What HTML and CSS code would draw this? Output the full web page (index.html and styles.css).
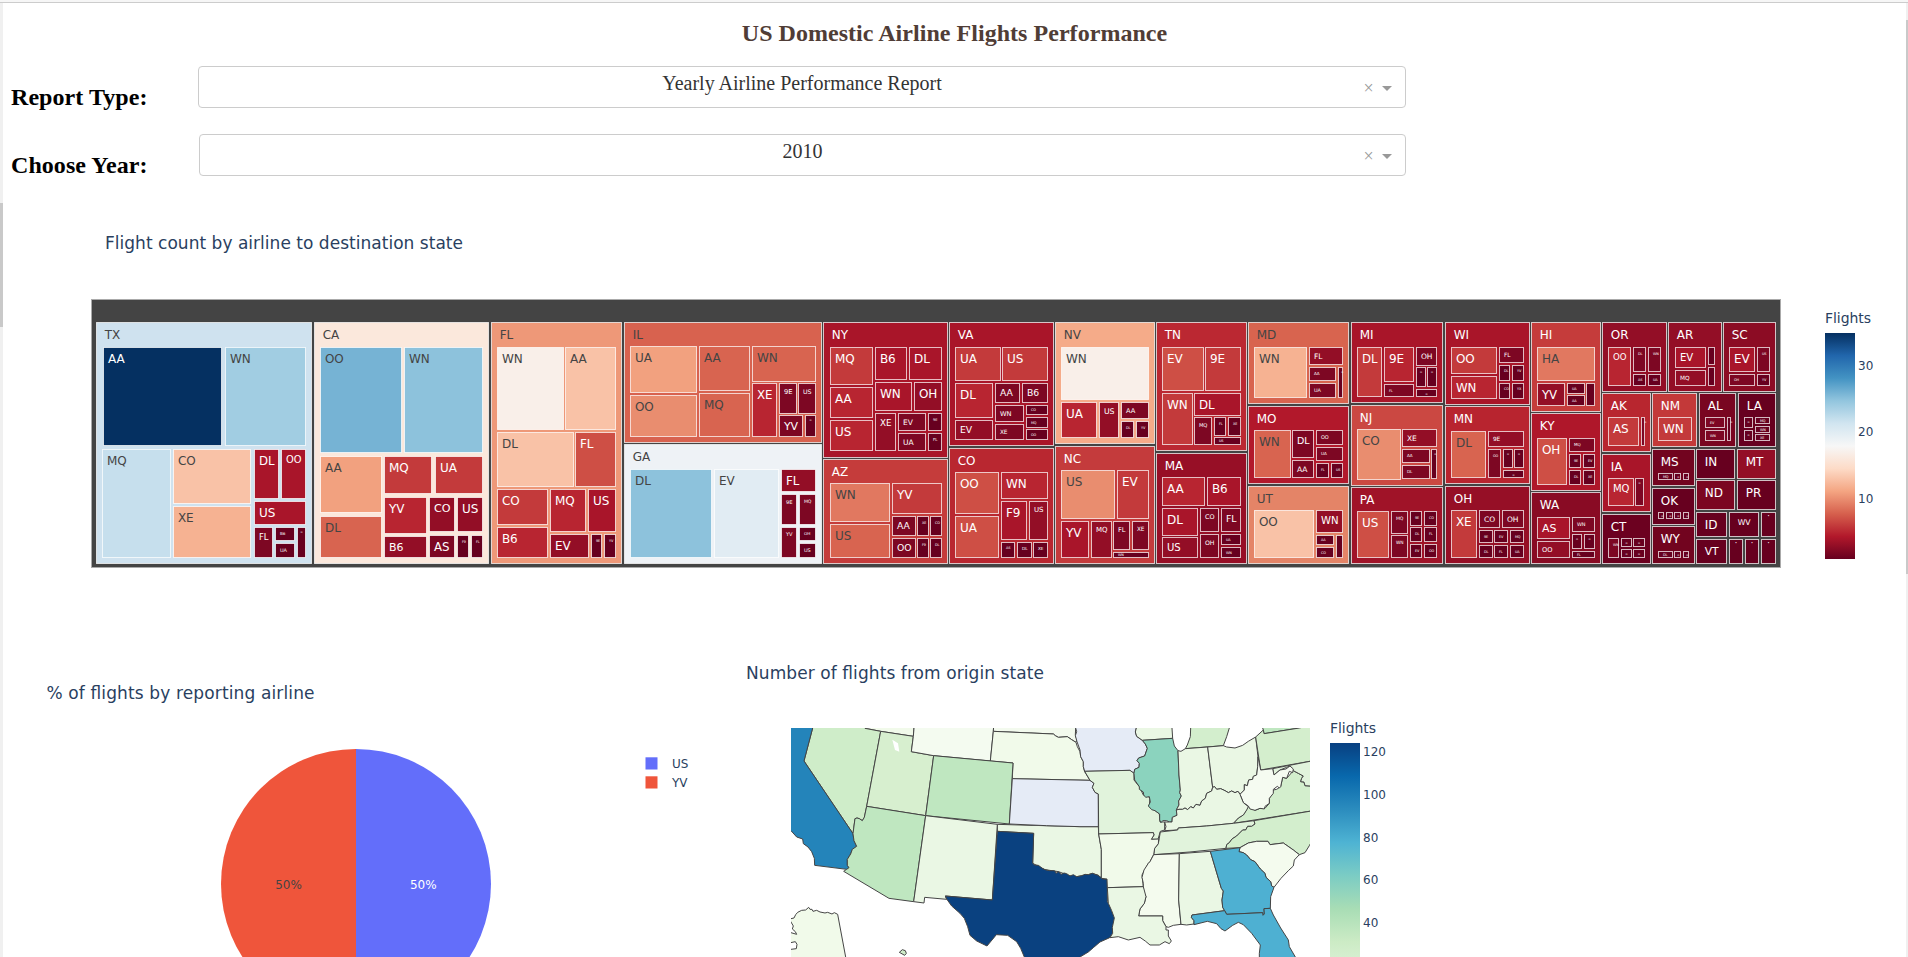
FILE: index.html
```html
<!DOCTYPE html>
<html lang="en">
<head>
<meta charset="utf-8">
<title>US Domestic Airline Flights Performance</title>
<link rel="stylesheet" href="styles.css">
</head>
<body>
<div class="topline"></div>
<div class="shell">
  <div class="rail rail-left"><div class="thumb thumb-left"></div></div>
  <main class="page">
    <h1 class="title">US Domestic Airline Flights Performance</h1>
    <div class="field">
      <h2 class="label">Report Type:</h2>
      <div class="select"><span class="value">Yearly Airline Performance Report</span><span class="clear">×</span><span class="arrow"></span></div>
    </div>
    <div class="field field-year">
      <h2 class="label">Choose Year:</h2>
      <div class="select"><span class="value">2010</span><span class="clear">×</span><span class="arrow"></span></div>
    </div>
    <svg class="chart tree" viewBox="3 190 1903 450" width="1903" height="450">
      <defs>
        <linearGradient id="rdbu" x1="0" y1="1" x2="0" y2="0">
          <stop offset="0" stop-color="#67001f"/><stop offset=".1" stop-color="#b2182b"/><stop offset=".2" stop-color="#d6604d"/><stop offset=".3" stop-color="#f4a582"/><stop offset=".4" stop-color="#fddbc7"/><stop offset=".5" stop-color="#f7f7f7"/><stop offset=".6" stop-color="#d1e5f0"/><stop offset=".7" stop-color="#92c5de"/><stop offset=".8" stop-color="#4393c3"/><stop offset=".9" stop-color="#2166ac"/><stop offset="1" stop-color="#053061"/>
        </linearGradient>
      </defs>
      <text class="chart-title" x="105" y="249" textLength="358">Flight count by airline to destination state</text>
      <g id="tree"></g>
      <text class="bar-title" x="1825" y="323" textLength="46">Flights</text>
      <rect x="1825" y="333" width="30" height="226" fill="url(#rdbu)"/>
      <g class="tick"><text x="1858" y="370">30</text><text x="1858" y="436">20</text><text x="1858" y="503">10</text></g>
    </svg>
    <div class="row">
      <svg class="chart" viewBox="3 640 700 317" width="700" height="317">
        <text class="chart-title" x="46.5" y="699" textLength="268">% of flights by reporting airline</text>
        <path d="M356 884V749a135 135 0 0 0 0 270z" fill="#ef553b"/>
        <path d="M356 884V749a135 135 0 0 1 0 270z" fill="#636efa"/>
        <g class="pct"><text x="288.5" y="888.5" fill="#444">50%</text><text x="423.3" y="888.5" fill="#fff">50%</text></g>
        <rect x="645.5" y="757.3" width="12" height="12.2" fill="#636efa"/><rect x="645.5" y="776.3" width="12" height="12.2" fill="#ef553b"/>
        <g class="tick"><text x="672" y="768">US</text><text x="672" y="787">YV</text></g>
      </svg>
      <svg class="chart" viewBox="703 640 1203 317" width="1203" height="317">
        <defs>
          <clipPath id="frame"><rect x="791" y="728" width="519" height="240"/></clipPath>
          <linearGradient id="gnbu" x1="0" y1="0" x2="0" y2="1">
            <stop offset="0" stop-color="#084081"/><stop offset=".125" stop-color="#0868ac"/><stop offset=".25" stop-color="#2b8cbe"/><stop offset=".375" stop-color="#4eb3d3"/><stop offset=".5" stop-color="#7bccc4"/><stop offset=".625" stop-color="#a8ddb5"/><stop offset=".75" stop-color="#ccebc5"/><stop offset=".875" stop-color="#e0f3db"/><stop offset="1" stop-color="#f7fcf0"/>
          </linearGradient>
        </defs>
        <text class="chart-title" x="746" y="678.5" textLength="298">Number of flights from origin state</text>
        <g clip-path="url(#frame)"><g id="west" class="states" transform="translate(780 700) scale(.33333)"></g><g id="east" class="states" transform="translate(1060 700) scale(.33333)"></g></g>
        <text class="bar-title" x="1330" y="733" textLength="46">Flights</text>
        <rect x="1330" y="743" width="30" height="265" fill="url(#gnbu)"/>
        <g class="tick"><text x="1363" y="756">120</text><text x="1363" y="799">100</text><text x="1363" y="842">80</text><text x="1363" y="884">60</text><text x="1363" y="927">40</text></g>
      </svg>
    </div>
  </main>
  <div class="rail rail-right"><div class="thumb thumb-right"></div></div>
</div>
<script src="charts.js"></script>
</body>
</html>
```
FILE: styles.css
```css
body { margin: 0; background: #fff; font-family: "Liberation Serif", serif; overflow: hidden; }
.topline { height: 2px; background: #f6f6f6; border-bottom: 1px solid #ccc; }
.shell { display: grid; grid-template-columns: 3px 1903px 2px; height: 954px; overflow: hidden; }
.rail { background: #f0f0f0; }
.rail-left { padding-top: 200px; }
.rail-right { padding-top: 17px; }
.thumb { background: #c9c9c9; }
.thumb-left { height: 124px; }
.thumb-right { height: 554px; }
.page { overflow: hidden; }
.title { margin: 0; padding: 16px 0 0; height: 47px; box-sizing: border-box; font-size: 24px; line-height: 28px; letter-spacing: .04px; text-align: center; color: #503d36; }
.field { display: grid; grid-template-columns: 187px 1208px; margin: 16px 0 0 8px; height: 42px; }
.field-year { margin-top: 26px; grid-template-columns: 188px 1207px; }
.label { margin: 0; padding-top: 18px; font-size: 24px; line-height: 27px; letter-spacing: .06px; color: #000; white-space: nowrap; }
.select { display: grid; grid-template-columns: 1fr 17px 26px; box-sizing: border-box; height: 42px; border: 1px solid #ccc; border-radius: 4px; }
.value { padding: 4px 0 0 43px; font-size: 20px; line-height: 24px; text-align: center; color: #333; }
.clear { padding-top: 11px; font-size: 18px; line-height: 20px; color: #999; text-align: center; margin-left: -4px; }
.arrow { width: 0; height: 0; margin: 19px 0 0 3px; border: 5px solid transparent; border-top-color: #999; border-bottom: 0; }
.chart { display: block; font-family: "DejaVu Sans", Verdana, sans-serif; }
.tree { margin-top: 14px; }
.row { display: flex; }
.chart-title { font-size: 17px; fill: #2a3f5f; }
.bar-title { font-size: 14px; fill: #2a3f5f; }
.tick { font-size: 12px; fill: #2a3f5f; }
.pct { font-size: 12px; text-anchor: middle; }
.cell { stroke: #fff; stroke-opacity: .72; stroke-width: 1; }
.root { fill: #444; stroke: #aaa; }
.light { fill: #fff; }
.dark { fill: #444; }
.states { stroke: #444; stroke-width: 3; stroke-linejoin: round; }
.lake { fill: #fff; stroke: none; }
```
FILE: charts.js
```js
const NS = 'http://www.w3.org/2000/svg';
function add(parent, tag, attrs, text) {
  const el = document.createElementNS(NS, tag);
  for (const k in attrs) el.setAttribute(k, attrs[k]);
  if (text) el.textContent = text;
  parent.appendChild(el);
  return el;
}
const STOPS = [[103,0,31],[178,24,43],[214,96,77],[244,165,130],[253,219,199],[247,247,247],[209,229,240],[146,197,222],[67,147,195],[33,102,172],[5,48,97]];
function rdbu(v) {
  const t = (v - 1) / 3.4, i = Math.min(9, Math.floor(t)), f = t - i;
  return `rgb(${STOPS[i].map((c, k) => Math.round(c + (STOPS[i + 1][k] - c) * f))})`;
}
// Each block: left origin, then states as [name, fill, text tone, "x0 y0 x1 y1", "airline flights x0 y0 x1 y1; ..."], in thirds of a pixel.
const BLOCKS = [
[85, [
['TX','#cfe2ef','dark','35 98 681 820','AA 35 54 171 411 468;WN 24 420 171 662 468;MQ 22 53 477 257 802;CO 13 266 477 498 641;XE 12 266 650 498 802;DL 4 507 477 580 626;OO 4 589 477 662 626;US 4 507 635 662 703;FL 2 507 712 564 802;B6 1 572 712 629 751;UA 1 572 761 629 802;- 1 638 712 662 802'],
['CA','#fbe8dc','dark','687 98 1212 820','OO 26 707 171 949 489;WN 25 959 171 1193 489;AA 11 707 498 889 669;DL 8 707 678 889 802;MQ 6 899 498 1041 612;UA 6 1050 498 1193 612;YV 5 899 623 1025 730;B6 3 899 740 1025 802;CO 3 1034 623 1109 726;US 3 1118 623 1193 726;AS 2 1034 736 1109 802;F9 1 1118 736 1151 802;FL 1 1160 736 1193 802']]],
[480, [
['FL','#ee9878','dark','35 98 426 820','WN 17 52 171 250 419;AA 13 257 171 408 419;DL 13 52 427 281 590;FL 7 287 427 408 590;CO 6 52 597 204 705;MQ 5 212 597 318 726;US 4 325 597 408 726;B6 5 52 712 204 802;EV 3 212 733 326 802;9E 1 333 733 366 802;YV 1 374 733 408 802'],
['IL','#d8624f','dark','432 98 1026 459','UA 11 450 170 651 308;OO 10 450 316 651 441;AA 8 657 170 809 302;MQ 8 657 309 809 441;WN 8 816 170 1007 274;XE 5 816 281 891 441;9E 2 898 281 949 370;US 2 956 281 1007 370;YV 2 898 377 969 441;- 1 976 377 1007 441'],
['GA','#eef2f6','dark','432 464 1026 820','DL 25 451 539 694 802;EV 20 702 539 895 802;FL 3 904 539 1006 604;9E 2 904 612 950 703;MQ 2 959 612 1006 703;YV 2 904 711 950 802;OH 1 959 711 1006 752;US 1 959 761 1006 802']]],
[815, [
['NY','#a91529','light','26 98 397 502','MQ 6 45 171 174 284;AA 5 45 291 174 384;US 5 45 391 174 483;B6 4 181 171 276 269;DL 4 283 171 380 269;WN 4 181 277 291 363;OH 3 298 277 380 363;XE 3 181 371 242 483;EV 2 250 371 333 423;UA 2 250 430 333 483;9E 1 341 371 380 423;FL 1 341 430 380 483'],
['AZ','#c53c3b','light','26 508 397 820','WN 9 45 580 225 695;US 8 45 702 225 802;YV 6 231 580 380 671;AA 2 231 679 302 737;OO 2 231 744 302 802;XE 1 308 679 340 737;CO 1 346 679 380 737;F9 1 308 744 340 802;DL 1 346 744 380 802'],
['VA','#a91529','light','404 98 716 467','UA 6 421 171 556 273;US 6 563 171 698 273;DL 5 421 281 533 384;EV 3 421 391 533 449;AA 2 541 281 615 338;B6 2 622 281 698 338;WN 2 541 345 626 394;XE 2 541 402 626 449;CO 1 634 345 698 375;MQ 1 634 382 698 413;OO 1 634 419 698 449'],
['CO','#b92730','light','404 474 716 820','OO 7 421 547 551 671;UA 7 421 679 551 802;WN 5 558 547 698 627;F9 4 558 634 635 749;US 3 642 634 698 749;AS 1 558 757 600 802;DL 1 606 757 649 802;XE 1 655 757 698 802']]],
[1045, [
['NV','#f5ab89','dark','32 98 328 462','WN 17 50 171 311 328;UA 5 50 336 155 443;US 3 162 336 221 443;AA 2 228 336 311 386;DL 1 228 393 266 443;YV 1 274 393 311 443'],
['NC','#c43b3c','light','32 469 328 820','US 10 50 541 209 687;EV 6 217 541 311 687;YV 4 50 694 131 802;MQ 3 139 694 199 802;FL 2 206 694 254 779;XE 2 262 694 311 779;WN 1 206 787 311 802'],
['TN','#bb2832','light','335 98 604 483','EV 7 352 171 476 303;9E 6 482 171 587 303;WN 6 352 310 442 465;DL 4 448 310 587 376;MQ 2 448 383 500 465;FL 1 507 383 543 436;XE 1 550 383 587 436;US 1 507 443 587 465'],
['MA','#970f26','light','335 490 604 820','AA 5 352 562 480 648;B6 4 486 562 587 648;DL 4 352 656 458 736;US 3 352 743 458 802;CO 2 465 656 521 725;OH 2 465 733 521 802;FL 2 528 656 587 725;UA 1 528 733 587 764;WN 1 528 771 587 802']]],
[1240, [
['MD','#d8644f','dark','25 98 327 342','WN 12 43 171 201 324;FL 3 207 171 309 224;AA 2 207 231 287 273;UA 2 207 281 287 324;- 1 294 231 309 324'],
['MO','#b2182b','light','25 348 327 581','WN 8 43 421 152 563;DL 2 158 421 222 503;AA 2 158 511 222 563;OO 2 229 421 309 464;UA 2 229 472 309 512;FL 1 229 520 267 563;US 1 273 520 309 563'],
['UT','#e48467','dark','25 588 327 820','OO 13 43 660 222 802;WN 3 229 660 309 727;AA 1 229 735 281 764;CO 1 229 772 281 802; 1 288 735 309 802'],
['MI','#a91529','light','334 98 608 338','DL 6 352 171 426 320;9E 5 433 171 521 275;FL 2 433 283 521 320;OH 2 528 171 591 226;- 1 528 232 557 290;- 1 563 232 591 290;- 1 528 297 591 320'],
['NJ','#cb4842','light','334 346 608 586','CO 10 352 418 481 569;XE 3 487 418 591 470;AA 2 487 477 568 519;DL 2 487 526 568 567;- 1 575 477 591 567'],
['PA','#a01328','light','334 592 608 820','US 7 352 665 446 802;MQ 2 453 665 503 730;WN 2 453 737 503 802;9E 1 510 665 546 707;CO 1 553 665 591 707;DL 1 510 713 546 755;FL 1 553 713 591 755;EV 1 510 762 546 802;OO 1 553 762 591 802']]],
[1430, [
['WI','#a91529','light','45 98 299 343','OO 6 63 171 201 251;WN 5 63 259 201 326;FL 2 207 171 281 217;DL 1 207 225 240 271;YV 1 247 225 281 271;CO 1 207 279 240 326;YX 1 247 279 281 326'],
['MN','#b8242f','light','45 350 299 581','DL 8 63 423 168 563;9E 3 174 423 281 470;OO 2 174 478 212 563;- 1 219 478 247 533;- 1 254 478 281 533;- 1 219 541 281 563'],
['OH','#960f26','light','45 588 299 820','XE 6 63 660 140 802;CO 2 147 660 210 713;OH 2 217 660 281 713;9E 1 147 720 187 757;EV 1 193 720 233 757;MQ 1 240 720 281 757;DL 1 147 765 187 802;FL 1 193 765 233 802;UA 1 240 765 281 802'],
['HI','#c53c3b','light','305 98 511 364','HA 9 323 171 493 272;YV 3 323 280 405 346;UA 1 412 280 463 310;AA 1 412 317 463 346; 1 470 280 493 346'],
['KY','#af172a','light','305 371 511 602','OH 7 323 444 411 583;MQ 2 417 444 493 485;9E 1 417 493 453 533;EV 1 460 493 493 533;DL 1 417 541 453 583;XE 1 460 541 493 583'],
['WA','#890b24','light','305 608 511 820','AS 4 323 681 419 746;OO 3 323 753 419 802;WN 2 426 681 493 725;- 1 426 732 455 776;- 1 462 732 493 776;FL 1 426 783 493 802']]],
[1590, [
['OR','#930e26','light','38 98 230 304','OO 5 55 171 122 286;DL 2 130 171 167 245;WN 2 174 171 212 245;AS 1 130 252 167 286;UA 1 174 252 212 286'],
['AR','#930e26','light','236 98 394 304','EV 4 255 171 347 234;MQ 3 255 241 347 286; 1 354 171 374 225; 1 354 232 374 286'],
['SC','#8c0c24','light','400 98 557 304','EV 4 418 171 495 245;US 2 502 171 539 245;OH 2 418 252 495 286;YV 1 502 252 539 286'],
['AK','#b8262f','light','38 311 181 485','AS 6 55 383 147 467;- 2 153 383 163 467'],
['NM','#c33939','light','188 311 321 469','WN 6 204 383 304 451'],
['AL','#790621','light','328 311 438 469','EV 2 346 383 404 413;WN 2 346 421 404 451;- 1 411 383 421 451'],
['LA','#67001f','light','445 311 557 469','- 1 464 383 489 413;- 1 464 421 489 451;MQ 1 496 383 539 402;WN 1 496 408 539 427;XE 1 496 433 539 451'],
['IA','#a91529','light','38 492 181 664','MQ 5 55 565 130 647;- 2 137 565 161 647'],
['CT','#6c0120','light','38 672 181 820','WN 2 55 744 87 802;- 1 94 744 125 770;- 1 131 744 163 770;- 1 94 777 125 802;- 1 131 777 163 802'],
['MS','#72041f','light','188 477 314 587','MQ 1 205 549 247 569;- 1 253 549 272 569;- 1 279 549 297 569'],
['OK','#67001f','light','188 594 314 703','- 1 205 666 222 686;- 1 229 666 247 686;- 1 253 666 272 686;- 1 279 666 297 686'],
['WY','#72041f','light','188 710 314 820','DL 1 205 783 247 802;- 1 253 783 272 802;- 1 279 783 297 802'],
['IN','#67001f','light','320 477 435 565',''],['MT','#930e26','light','442 477 557 565',''],
['ND','#7b0621','light','320 572 435 660',''],['PR','#67001f','light','442 572 557 660',''],
['ID','#67001f','light','320 667 411 741',''],['WV','#67001f','light','418 667 507 741',''],['·','#67001f','light','513 667 557 741',''],
['VT','#67001f','light','320 747 411 820',''],['·','#67001f','light','418 747 459 820',''],['·','#67001f','light','465 747 507 820',''],['·','#67001f','light','513 747 557 820','']]]
];
const tree = document.getElementById('tree');
add(tree, 'rect', {class: 'root', x: 91.5, y: 299.5, width: 1689, height: 268});
function box(ox, q, fill, name, tone, state) {
  const snap = n => Math.floor(n) + .5;
  const x = snap(ox + q[0] / 3), y = snap(290 + q[1] / 3);
  const w = snap(ox + (q[2] - 1) / 3) - x, h = snap(290 + (q[3] - 1) / 3) - y;
  add(tree, 'rect', {class: 'cell', x, y, width: w, height: h, fill});
  if (!name) return;
  if (name === '·') {
    add(tree, 'text', {class: tone, x: x + w / 2 - 1.3, y: y + 6, 'font-size': 8}, name);
    return;
  }
  if (name === '-') {
    add(tree, 'text', {class: tone, x: x + Math.max(w / 2 - 1.3, 2.6), y: y + Math.min(6.5, h / 2 + 2.5), 'font-size': 7}, name);
    return;
  }
  const pad = state ? 8.2 : 4.4;
  const t = add(tree, 'text', {class: tone, x: x + pad, y: y + 16, 'font-size': 12}, name);
  let fs = Math.min(12, 12 * (w - pad * 2 + .4) / t.getComputedTextLength(), state ? 12 : 12 * (h - 8.2) / 14);
  fs = Math.max(fs, 3.4);
  t.setAttribute('font-size', fs);
  t.setAttribute('y', state ? y + 4.3 + fs : Math.min(y + 4 + .97 * fs, fs < 5 ? y + h / 2 + .4 * fs + (h > 14 ? -2 : 0) : 9999));
}
for (const [ox, states] of BLOCKS) for (const [name, fill, tone, pos, cells] of states) {
  box(ox, pos.split(' ').map(Number), fill, name, tone, true);
  if (cells) for (const c of cells.split(';')) {
    const [code, v, ...q] = c.split(' ');
    box(ox, q.map(Number), rdbu(+v), code, v >= 8 && v < 30 ? 'dark' : 'light', false);
  }
}

const WEST = [
['#eaf7e4','652,373 720,375 900,380 955,380 956,402 964,448 964,534 955,526 937,520 925,524 890,530 870,528 836,515 795,509 758,490 761,400 652,394'],
['#f1faea','240,60 404,60 400,109 302,94 255,85'],
['#cfedc9','104,60 98,84 72,183 219,401 225,356 231,354 238,356 247,362 253,352 260,319 302,94 255,85 240,60'],
['#2484ba','20,60 104,60 98,84 72,183 219,401 222,422 230,439 217,448 212,462 202,478 202,496 207,503 200,508 104,496 103,475 95,455 84,441 70,431 68,417 50,411 33,392 20,380'],
['#d7efcf','302,94 400,109 394,155 461,167 437,347 260,319'],
['#f4fbf0','404,60 400,109 394,155 461,167 631,183 640,94 642,60'],
['#f3faee','642,60 640,94 820,102 826,107 835,112 862,110 875,119 888,127 891,120 886,105 887,84 887,60'],
['#f1faea','640,94 820,102 826,107 835,112 862,110 875,119 888,127 892,140 900,155 902,170 910,185 910,200 914,215 922,228 930,241 697,236 699,189 631,183'],
['#bfe7c0','461,167 699,189 688,372 437,347'],
['#e5ebf6','697,236 930,241 942,250 937,262 945,277 955,282 955,380 900,380 800,377 688,372'],
['#bfe7c0','260,319 437,347 401,605 327,595 191,514 200,508 207,503 202,496 202,478 212,462 217,448 230,439 222,422 219,401 225,356 231,354 238,356 247,362 253,352'],
['#eaf7e4','437,347 652,373 637,600 496,588 500,598 434,592 432,609 401,605'],
['#0a4180','652,394 761,400 758,490 764,495 775,496 782,501 787,505 795,509 808,512 822,512 826,514 828,520 836,515 843,523 852,519 860,521 870,528 880,524 890,530 905,527 915,523 925,524 937,520 948,524 955,526 959,531 965,532 968,537 982,537 982,605 988,613 995,632 1004,654 1002,670 997,685 998,700 989,713 960,726 940,743 925,756 900,771 880,800 750,800 733,771 722,745 710,725 683,706 649,704 641,714 621,738 590,723 570,706 563,680 553,655 540,640 515,618 500,597 496,588 637,600'],
['#f1faea','20,664 33,656 42,654 47,644 53,637 65,631 77,630 86,622 90,628 96,628 99,634 110,631 120,636 135,639 143,637 156,642 163,638 173,643 197,771 204,800 20,800'],
['#cfedc9','358,757 367,749 376,752 379,760 374,766']
];
const EAST = [
['#e5ebf6','47,60 47,84 50,95 46,107 51,125 60,150 62,170 70,185 70,200 74,214 210,211 222,220 224,208 237,202 238,190 231,182 236,174 254,168 262,145 256,132 247,121 230,109 226,96 229,84 229,60'],
['#eaf7e4','229,60 229,84 226,96 230,109 247,121 338,115 336,84 336,60'],
['#d3eecd','390,60 392,84 391,110 382,135 376,146 490,137 500,110 508,84 512,60'],
['#e1f3dc','74,214 90,241 102,250 97,262 105,277 115,282 116,402 280,398 282,405 274,418 294,418 301,394 314,390 314,366 300,366 298,342 268,318 270,292 250,285 238,260 222,240 222,220 210,211'],
['#8bd3be','247,121 338,115 343,138 354,152 357,225 361,270 359,278 364,288 356,303 357,315 349,330 351,346 337,352 336,366 328,366 320,362 308,362 303,368 299,360 299,342 285,332 275,329 265,318 271,306 268,290 257,292 251,285 250,276 238,268 238,260 224,240 222,220 224,208 237,202 238,190 231,182 236,174 254,168 262,145 256,132'],
['#eaf7e4','354,152 363,154 376,146 443,141 458,262 455,273 440,280 436,295 425,303 420,316 408,313 400,324 392,320 383,329 375,324 368,328 357,328 349,330 357,315 356,303 364,288 359,278 361,270 357,225'],
['#eaf7e4','443,141 490,137 500,141 525,144 548,136 565,124 587,111 594,170 593,200 590,225 580,229 578,238 566,240 562,257 553,254 553,270 540,283 534,274 525,278 515,273 505,278 495,272 482,266 470,268 464,260 458,262'],
['#bfe7c0','600,60 610,90 612,101 718,84 760,74 760,60'],
['#d4eecd','587,111 610,90 612,101 718,84 760,74 760,182 602,210'],
['#d3eecd','520,370 535,354 550,345 560,328 565,318 585,331 600,325 615,325 628,310 628,295 640,270 650,268 662,260 668,232 680,235 700,212 715,220 730,228 725,235 722,245 732,246 735,257 750,258 760,262 760,332'],
['#e1f3dc','638,206 760,182 760,262 750,258 735,257 732,246 722,245 725,235 730,228 715,220 700,212 690,198 680,202 660,210 642,225'],
['#f5fbf1','594,170 602,210 638,206 642,225 660,210 678,207 690,198 700,207 698,218 688,214 680,235 668,232 662,260 658,264 652,259 640,268 640,280 628,295 628,310 615,319 613,327 600,325 585,331 570,327 565,318 550,308 540,283 553,270 553,254 562,257 566,240 578,238 580,229 590,225 593,200'],
['#eaf7e4','349,330 357,328 368,328 375,324 383,329 392,320 400,324 408,313 420,316 425,303 436,295 440,280 455,273 458,262 464,260 470,268 482,266 495,272 505,278 515,273 525,278 534,274 540,283 550,308 565,320 560,330 550,345 535,354 520,370 440,378 355,384 353,390 314,392 318,380 314,366 328,366 336,366 337,352 351,346'],
['#e1f3dc','301,396 353,390 355,384 440,378 520,370 582,362 585,372 575,379 563,379 557,390 548,390 530,408 516,417 508,428 500,434 498,445 390,456 281,464 284,445 295,431'],
['#d3eecd','582,362 760,332 760,415 748,437 735,458 718,464 700,450 670,429 630,434 624,424 590,424 565,429 540,443 498,445 500,434 508,428 516,417 530,408 548,390 557,390 563,379 575,379 585,372'],
['#f1faea','116,402 280,398 282,405 274,418 296,417 295,431 284,445 281,464 270,485 265,490 246,525 250,560 142,563 141,537 124,535 124,448'],
['#f4fbee','281,464 358,461 356,600 363,673 340,676 325,682 318,680 308,662 308,648 236,648 240,627 253,610 258,590 250,575 250,550 246,532 252,510 265,490 270,485'],
['#eaf7e4','358,461 451,454 484,565 490,573 486,600 488,622 494,632 396,645 394,652 402,662 402,672 380,675 363,673 356,600'],
['#f4fbee','540,443 565,429 590,424 624,424 630,434 670,429 700,450 718,464 703,480 700,498 685,512 663,535 642,562 635,558 632,545 618,532 615,520 601,507 585,485 572,479 560,465 550,458 537,455'],
['#4eb0d2','451,454 540,443 537,455 550,458 560,465 572,479 585,485 601,507 615,520 618,532 632,545 635,558 642,562 632,590 631,625 612,626 613,642 609,646 608,638 500,643 494,632 488,622 486,600 490,573 484,565'],
['#eaf7e4','142,563 250,560 258,590 253,610 240,627 236,648 308,648 308,662 318,680 318,690 325,690 325,708 334,723 328,731 315,725 298,735 270,735 257,724 240,712 205,720 175,710 150,713 158,700 157,682 163,654 155,632 145,610'],
['#4eb0d2','396,645 494,632 500,643 608,638 609,646 613,642 612,626 631,625 640,645 662,684 685,720 688,740 706,771 720,800 598,800 598,760 601,735 575,700 550,674 535,667 518,676 495,693 483,686 470,671 442,664 402,674 402,662 394,652']
];
for (const [id, list] of [['west', WEST], ['east', EAST]]) for (const [fill, points] of list) add(document.getElementById(id), 'polygon', {fill, points});
add(document.getElementById('west'), 'polygon', {class: 'lake', points: '337,119 354,130 358,155 345,150'});
add(document.getElementById('west'), 'path', {fill: '#fff', d: 'M30 661l10 17-3 9 9 8 4 8-17-5M32 728l14-3 5 8-2 13-16 2'});
```
